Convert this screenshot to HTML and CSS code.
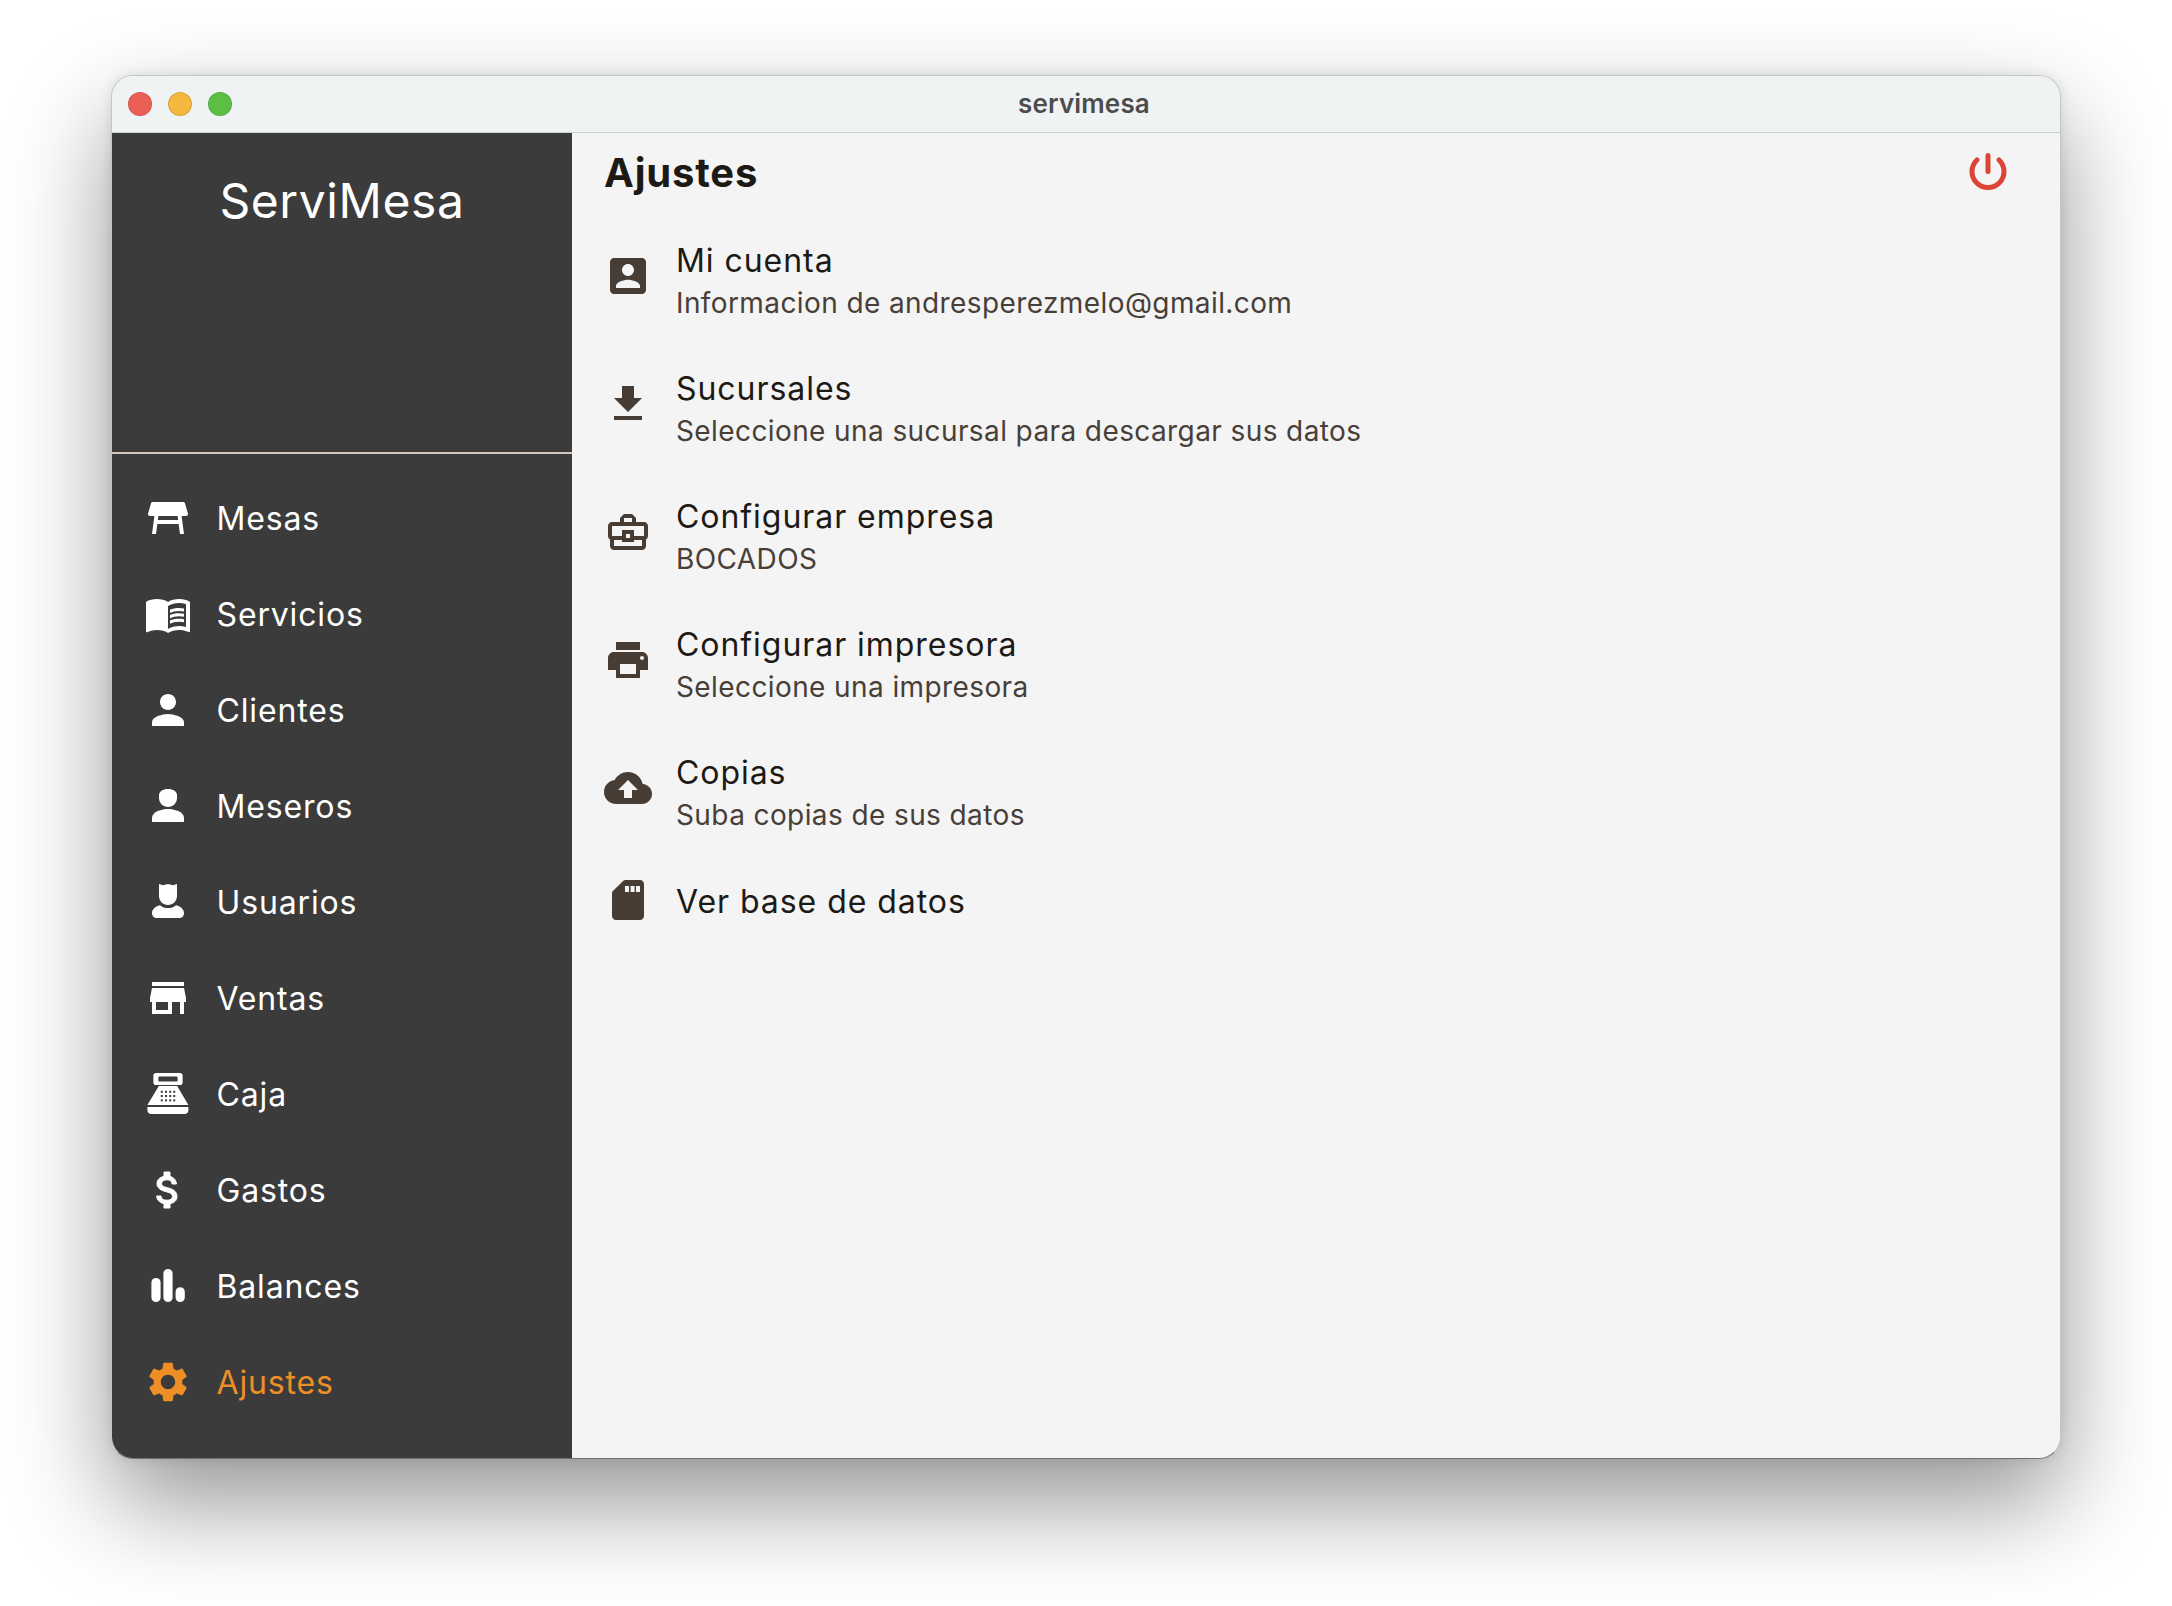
FILE: index.html
```html
<!DOCTYPE html>
<html lang="es">
<head>
<meta charset="utf-8">
<title>servimesa</title>
<link rel="stylesheet" href="styles.css">
</head>
<body>
<div class="window">
  <header class="titlebar">
    <div class="lights"><span class="light red"></span><span class="light yellow"></span><span class="light green"></span></div>
    <div class="wintitle">servimesa</div>
  </header>
  <div class="app">
    <aside class="sidebar">
      <div class="brand">ServiMesa</div>
      <nav class="nav">
        <a class="nav-item"><svg class="icon" viewBox="0 0 24 24"><path d="M21.96 9.73l-1.43-5C20.41 4.3 20.02 4 19.57 4H4.43C3.98 4 3.59 4.3 3.47 4.73l-1.43 5C1.86 10.36 2.34 11 3 11h2.2L4 20h2l.67-5h10.67l.66 5h2l-1.2-9H21c.66 0 1.14-.64.96-1.27zM6.93 13l.27-2h9.6l.27 2H6.93z"/></svg><span>Mesas</span></a>
        <a class="nav-item"><svg class="icon" viewBox="0 0 24 24"><path d="M21 5c-1.11-.35-2.33-.5-3.5-.5-1.95 0-4.05.4-5.5 1.5-1.45-1.1-3.55-1.5-5.5-1.5S2.45 4.9 1 6v14.65c0 .25.25.5.5.5.1 0 .15-.05.25-.05C3.1 20.45 5.05 20 6.5 20c1.95 0 4.05.4 5.5 1.5 1.35-.85 3.8-1.5 5.5-1.5 1.65 0 3.35.3 4.75 1.05.1.05.15.05.25.05.25 0 .5-.25.5-.5V6c-.6-.45-1.25-.75-2-1zm0 13.5c-1.1-.35-2.3-.5-3.5-.5-1.7 0-4.15.65-5.5 1.5V8c1.35-.85 3.8-1.5 5.5-1.5 1.2 0 2.4.15 3.5.5v11.5z"/><path d="M17.5 10.5c.88 0 1.73.09 2.5.26V9.24c-.79-.15-1.64-.24-2.5-.24-1.7 0-3.24.29-4.5.83v1.66c1.13-.64 2.7-.99 4.5-.99zM13 12.49v1.66c1.13-.64 2.7-.99 4.5-.99.88 0 1.73.09 2.5.26V11.9c-.79-.15-1.64-.24-2.5-.24-1.7 0-3.24.3-4.5.83zM17.5 14.33c-1.7 0-3.24.29-4.5.83v1.66c1.13-.64 2.7-.99 4.5-.99.88 0 1.73.09 2.5.26v-1.52c-.79-.16-1.64-.24-2.5-.24z"/></svg><span>Servicios</span></a>
        <a class="nav-item"><svg class="icon" viewBox="0 0 24 24"><path d="M12 12c2.21 0 4-1.79 4-4s-1.79-4-4-4-4 1.79-4 4 1.79 4 4 4zm0 2c-2.67 0-8 1.34-8 4v2h16v-2c0-2.66-5.33-4-8-4z"/></svg><span>Clientes</span></a>
        <a class="nav-item"><svg class="icon" viewBox="0 0 24 24"><path d="M7.5 8V6.5C7.5 4.8 9.5 3.5 12 3.500s4.500 1.300 4.500 3V8c0 2.500-2 4.500-4.500 4.500S7.500 10.500 7.500 8z"/><path d="M12 13.500c-3 0-8 1.300-8 4.500v2h16v-2c0-3.200-5-4.500-8-4.500z"/></svg><span>Meseros</span></a>
        <a class="nav-item"><svg class="icon" viewBox="0 0 24 24"><path d="M7.500 3l2 .6L12 3l2.500.6 2-.6v6c0 2.500-2 4.500-4.500 4.500S7.500 11.500 7.500 9z"/><path d="M8 13.600c1 1 2.500 1.400 4 1.400s3-.4 4-1.400c2.500.6 4 2.200 4 3.900 0 1.500-1 2.500-2.500 2.500h-11C5 20 4 19 4 17.500 4 15.800 5.500 14.200 8 13.600z"/></svg><span>Usuarios</span></a>
        <a class="nav-item"><svg class="icon" viewBox="0 0 24 24"><path d="M20 4H4v2h16V4zm1 10v-2l-1-5H4l-1 5v2h1v6h10v-6h4v6h2v-6h1zm-9 4H6v-4h6v4z"/></svg><span>Ventas</span></a>
        <a class="nav-item"><svg class="icon" viewBox="0 0 24 24"><path fill-rule="evenodd" d="M6 1.500h12c.8 0 1.300.5 1.300 1.300v3.400c0 .8-.5 1.300-1.300 1.300H6c-.8 0-1.300-.5-1.300-1.300V2.800c0-.8.5-1.300 1.300-1.300zM7.800 3.300c-.4 0-.6.2-.6.6v1.300c0 .4.2.6.6.6h8.400c.4 0 .6-.2.6-.6V3.900c0-.4-.2-.6-.6-.6z"/><path d="M7.400 8h9.200l5.600 9.500H1.700z"/><path d="M1.700 18.500h20.500V20c0 1.200-.8 2-2 2H3.700c-1.200 0-2-.8-2-2z"/><g class="keys"><rect x="8.400" y="10.400" width="1" height="1"/><rect x="10.500" y="10.400" width="1" height="1"/><rect x="12.600" y="10.400" width="1" height="1"/><rect x="14.600" y="10.400" width="1" height="1"/><rect x="8.400" y="12.500" width="1" height="1"/><rect x="10.500" y="12.500" width="1" height="1"/><rect x="12.600" y="12.500" width="1" height="1"/><rect x="14.600" y="12.500" width="1" height="1"/><rect x="8.400" y="14.700" width="1" height="1"/><rect x="10.500" y="14.700" width="1" height="1"/><rect x="12.600" y="14.700" width="1" height="1"/><rect x="14.600" y="14.700" width="1" height="1"/></g></svg><span>Caja</span></a>
        <a class="nav-item"><svg class="icon bold" viewBox="0 0 24 24"><path d="M11.800 10.900c-2.270-.59-3-1.200-3-2.150 0-1.090 1.010-1.850 2.700-1.850 1.780 0 2.440.85 2.500 2.100h2.210c-.07-1.720-1.120-3.300-3.210-3.810V3h-3v2.160c-1.940.42-3.500 1.680-3.500 3.610 0 2.310 1.910 3.460 4.700 4.130 2.500.6 3 1.480 3 2.410 0 .69-.49 1.790-2.700 1.790-2.060 0-2.870-.92-2.980-2.100h-2.200c.12 2.190 1.760 3.420 3.680 3.830V21h3v-2.150c1.950-.37 3.500-1.500 3.500-3.550 0-2.840-2.430-3.810-4.700-4.400z"/></svg><span>Gastos</span></a>
        <a class="nav-item"><svg class="icon" viewBox="0 0 24 24"><rect x="3.700" y="8" width="4.600" height="12" rx="2.300"/><rect x="9.700" y="3.500" width="4.600" height="16.500" rx="2.300"/><rect x="15.800" y="12.600" width="4.600" height="7.400" rx="2.300"/></svg><span>Balances</span></a>
        <a class="nav-item active"><svg class="icon" viewBox="0 0 24 24"><path d="M19.140 12.940c.04-.3.06-.61.06-.94 0-.32-.02-.64-.07-.94l2.030-1.580c.18-.14.23-.41.12-.61l-1.920-3.320c-.12-.22-.37-.29-.59-.22l-2.390.96c-.5-.38-1.030-.7-1.620-.94l-.36-2.540c-.04-.24-.24-.41-.48-.41h-3.840c-.24 0-.43.17-.47.41l-.36 2.540c-.59.24-1.130.57-1.620.94l-2.390-.96c-.22-.08-.47 0-.59.22L2.740 8.870c-.12.21-.08.47.12.61l2.030 1.580c-.05.3-.09.63-.09.94s.02.64.07.94l-2.030 1.580c-.18.14-.23.41-.12.61l1.920 3.320c.12.22.37.29.59.22l2.390-.96c.5.38 1.030.7 1.620.94l.36 2.540c.05.24.24.41.48.41h3.840c.24 0 .44-.17.47-.41l.36-2.540c.59-.24 1.130-.56 1.620-.94l2.390.96c.22.08.47 0 .59-.22l1.920-3.320c.12-.22.07-.47-.12-.61l-2.010-1.580zM12 15.600c-1.980 0-3.600-1.620-3.600-3.600s1.620-3.600 3.600-3.600 3.600 1.620 3.600 3.600-1.620 3.600-3.600 3.600z"/></svg><span>Ajustes</span></a>
      </nav>
    </aside>
    <main class="content">
      <div class="page-head">
        <h1 class="page-title">Ajustes</h1>
        <button class="power" aria-label="Salir"><svg class="power-icon" viewBox="0 0 48 48"><path d="M24 8.500V24.500"/><path d="M13 13a16 16 0 1 0 22 0"/></svg></button>
      </div>
      <ul class="settings">
        <li class="setting"><svg class="icon" viewBox="0 0 24 24"><path d="M3 5v14c0 1.100.89 2 2 2h14c1.100 0 2-.9 2-2V5c0-1.100-.9-2-2-2H5c-1.110 0-2 .9-2 2zm12 4c0 1.660-1.340 3-3 3s-3-1.340-3-3 1.340-3 3-3 3 1.340 3 3zm-9 8c0-2 4-3.100 6-3.100s6 1.100 6 3.100v1H6v-1z"/></svg><div class="setting-text"><div class="setting-title">Mi cuenta</div><div class="setting-sub">Informacion de andresperezmelo@gmail.com</div></div></li>
        <li class="setting"><svg class="icon" viewBox="0 0 24 24"><path d="M19 9h-4V3H9v6H5l7 7 7-7zM5 18v2h14v-2H5z"/></svg><div class="setting-text"><div class="setting-title">Sucursales</div><div class="setting-sub">Seleccione una sucursal para descargar sus datos</div></div></li>
        <li class="setting"><svg class="icon" viewBox="0 0 24 24"><path d="M20 7h-4V5l-2-2h-4L8 5v2H4c-1.100 0-2 .9-2 2v5c0 .75.4 1.380 1 1.730V19c0 1.110.89 2 2 2h14c1.110 0 2-.89 2-2v-3.280c.59-.35 1-.99 1-1.720V9c0-1.100-.9-2-2-2zM10 5h4v2h-4V5zM4 9h16v5h-5v-3H9v3H4V9zm9 6h-2v-2h2v2zm6 4H5v-3h4v1h6v-1h4v3z"/></svg><div class="setting-text"><div class="setting-title">Configurar empresa</div><div class="setting-sub">BOCADOS</div></div></li>
        <li class="setting"><svg class="icon" viewBox="0 0 24 24"><path d="M19 8H5c-1.660 0-3 1.340-3 3v6h4v4h12v-4h4v-6c0-1.660-1.340-3-3-3zm-3 11H8v-5h8v5zm3-7c-.55 0-1-.45-1-1s.45-1 1-1 1 .45 1 1-.45 1-1 1zm-1-9H6v4h12V3z"/></svg><div class="setting-text"><div class="setting-title">Configurar impresora</div><div class="setting-sub">Seleccione una impresora</div></div></li>
        <li class="setting"><svg class="icon" viewBox="0 0 24 24"><path d="M19.350 10.040C18.670 6.590 15.640 4 12 4 9.110 4 6.600 5.640 5.350 8.040 2.340 8.360 0 10.910 0 14c0 3.310 2.690 6 6 6h13c2.760 0 5-2.240 5-5 0-2.640-2.050-4.780-4.650-4.960zM14 13v4h-4v-4H7l5-5 5 5h-3z"/></svg><div class="setting-text"><div class="setting-title">Copias</div><div class="setting-sub">Suba copias de sus datos</div></div></li>
        <li class="setting single"><svg class="icon" viewBox="0 0 24 24"><path fill-rule="evenodd" d="M18 2h-7.170c-.53 0-1.040.21-1.420.59L4.600 7.400c-.37.37-.6.89-.6 1.420V20c0 1.100.9 2 2 2h12c1.100 0 2-.9 2-2V4c0-1.100-.9-2-2-2zM10.500 5h2v3h-2zM13.300 5h2v3h-2zM16 5h2v3h-2z"/></svg><div class="setting-text"><div class="setting-title">Ver base de datos</div></div></li>
      </ul>
    </main>
  </div>
</div>
</body>
</html>
```
FILE: styles.css
```css
* { box-sizing: border-box; }
html, body { margin: 0; padding: 0; height: 100%; }
body {
  background: #fff;
  padding: 75px 111px 0;
  overflow: hidden;
  font-family: "Inter", "Noto Sans", sans-serif;
}
.window {
  width: 1950px;
  height: 1384px;
  border: 1px solid #c4c6c6;
  border-bottom-color: #707070;
  border-radius: 22px;
  overflow: hidden;
  box-shadow: 0 44px 100px 0 rgba(0, 0, 0, .42), 0 0 12px rgba(0, 0, 0, .1);
  display: flex;
  flex-direction: column;
  background: #f4f4f4;
}
.titlebar {
  height: 57px;
  flex: none;
  background: #eff3f4;
  border-bottom: 1px solid #cdd0d0;
  display: grid;
  grid-template-columns: 1fr auto 1fr;
  align-items: center;
}
.lights { display: flex; gap: 16px; padding-left: 16px; }
.light { width: 24px; height: 24px; border-radius: 50%; border: 1px solid rgba(0, 0, 0, .1); }
.red { background: #ec5f56; }
.yellow { background: #f4b83f; }
.green { background: #5cbf45; }
.wintitle { font-size: 26px; font-weight: 600; letter-spacing: .15px; color: #4c4c4c; margin: 0 4px 2px 0; }
.app { flex: 1; display: flex; min-height: 0; }
.sidebar { width: 460px; flex: none; background: #3b3b3b; color: #fff; display: flex; flex-direction: column; }
.brand {
  height: 321px;
  flex: none;
  border-bottom: 2px solid #d4c6bc;
  text-align: center;
  font-size: 48px;
  letter-spacing: .6px;
  line-height: 58px;
  padding-top: 39px;
}
.nav { padding-top: 16px; display: flex; flex-direction: column; }
.nav-item {
  height: 96px;
  padding-left: 32px;
  display: flex;
  align-items: center;
  gap: 24px;
  font-size: 32px;
  letter-spacing: .85px;
  color: #fff;
}
.nav-item span { padding: 1px 0 0 .5px; }
.nav-item.active { color: #ee8e27; }
.icon { width: 48px; height: 48px; flex: none; fill: currentColor; }
.bold { stroke: currentColor; stroke-width: .5; }
.keys { fill: #3b3b3b; }
.content { flex: 1; min-width: 0; padding-left: 32px; color: #1d1a16; }
.page-head { height: 78px; display: flex; align-items: center; justify-content: space-between; padding-right: 48px; }
.page-title { margin: 0; padding-top: 2px; font-size: 40px; font-weight: 700; line-height: 48px; letter-spacing: .8px; }
.power { border: 0; background: none; padding: 0; width: 48px; height: 48px; margin-bottom: 2px; }
.power-icon { display: block; width: 48px; height: 48px; fill: none; stroke: #db4437; stroke-width: 5; stroke-linecap: round; }
.settings { list-style: none; margin: 0; padding: 1px 0 0; }
.setting { height: 128px; display: flex; align-items: center; gap: 24px; }
.setting.single { height: 96px; }
.setting .icon { color: #473d35; }
.setting-text { padding-top: 9px; }
.single .setting-text { padding-top: 3px; }
.setting-title { font-size: 32px; line-height: 44px; letter-spacing: .95px; }
.setting-sub { font-size: 28px; line-height: 40px; letter-spacing: .4px; color: #473f38; }
```
